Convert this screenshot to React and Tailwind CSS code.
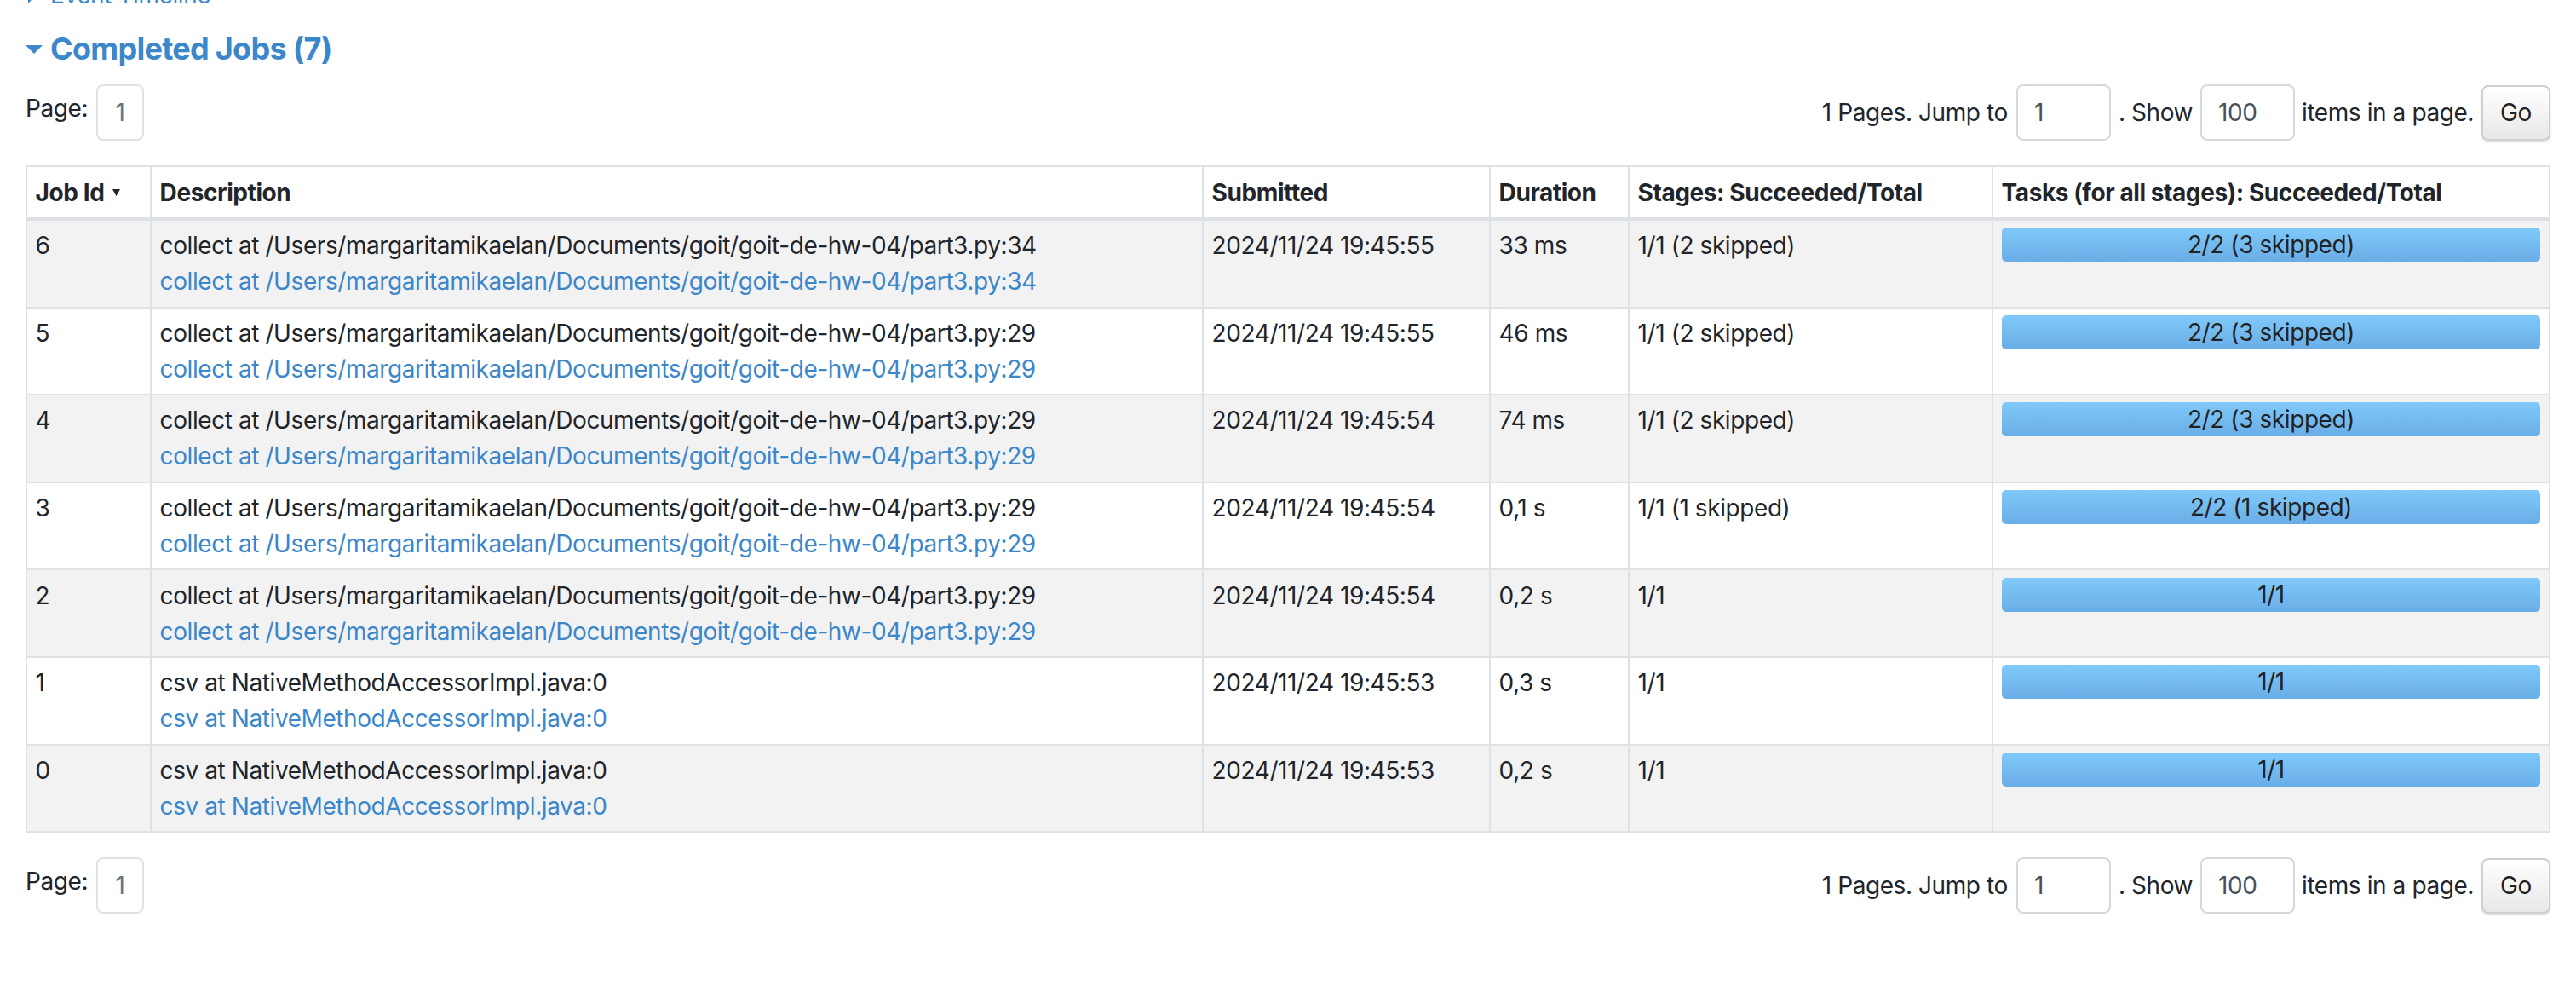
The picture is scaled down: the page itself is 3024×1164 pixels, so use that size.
import React from 'react';

const font = { fontFamily: 'Inter, "Noto Sans", sans-serif' };

const jobs = [
    { id: 6, desc: 'collect at /Users/margaritamikaelan/Documents/goit/goit-de-hw-04/part3.py:34', submitted: '2024/11/24 19:45:55', duration: '33 ms', stages: '1/1 (2 skipped)', tasks: '2/2 (3 skipped)' },
    { id: 5, desc: 'collect at /Users/margaritamikaelan/Documents/goit/goit-de-hw-04/part3.py:29', submitted: '2024/11/24 19:45:55', duration: '46 ms', stages: '1/1 (2 skipped)', tasks: '2/2 (3 skipped)' },
    { id: 4, desc: 'collect at /Users/margaritamikaelan/Documents/goit/goit-de-hw-04/part3.py:29', submitted: '2024/11/24 19:45:54', duration: '74 ms', stages: '1/1 (2 skipped)', tasks: '2/2 (3 skipped)' },
    { id: 3, desc: 'collect at /Users/margaritamikaelan/Documents/goit/goit-de-hw-04/part3.py:29', submitted: '2024/11/24 19:45:54', duration: '0,1 s', stages: '1/1 (1 skipped)', tasks: '2/2 (1 skipped)' },
    { id: 2, desc: 'collect at /Users/margaritamikaelan/Documents/goit/goit-de-hw-04/part3.py:29', submitted: '2024/11/24 19:45:54', duration: '0,2 s', stages: '1/1', tasks: '1/1' },
    { id: 1, desc: 'csv at NativeMethodAccessorImpl.java:0', submitted: '2024/11/24 19:45:53', duration: '0,3 s', stages: '1/1', tasks: '1/1' },
    { id: 0, desc: 'csv at NativeMethodAccessorImpl.java:0', submitted: '2024/11/24 19:45:53', duration: '0,2 s', stages: '1/1', tasks: '1/1' },
];

// pagination bar (top and bottom of the table)
const Pagination = () => (
    <div className="flex items-start justify-between h-[66px]">
        <div className="flex items-start">
            <span className="mt-[7px] leading-[42px]">Page:</span>
            <span className="ml-[10px] w-[56px] h-[66px] border-2 border-[#dee2e6] rounded-[8px] flex items-center justify-center text-[#6c757d]">1</span>
        </div>
        <div className="flex items-center">
            <span>1 Pages. Jump to</span>
            <span className="ml-[10px] w-[111px] h-[66px] border-2 border-[#d5d9de] rounded-[8px] flex items-center pl-[19px] text-[#495057]">1</span>
            <span className="ml-[9px]">. Show</span>
            <span className="ml-[9px] w-[111px] h-[66px] border-2 border-[#d5d9de] rounded-[8px] flex items-center pl-[19px] text-[#495057]">100</span>
            <span className="ml-[8px]">items in a page.</span>
            <span className="ml-[9px] w-[81px] h-[65px] border-2 border-[#cfcfcf] rounded-[8px] bg-gradient-to-b from-white to-[#e8e8e8] shadow-[0_2px_2px_rgba(0,0,0,0.15)] flex items-center justify-center text-[#222]">Go</span>
        </div>
    </div>
);

const Bar = ({ text }) => (
    <div className="h-[40px] rounded-[5px] bg-gradient-to-b from-[#80c9fa] to-[#69ade6] flex items-center justify-center text-[#222]">
        {text}
    </div>
);

export default function App() {
    return (
        <div className="min-h-[1164px] bg-white text-[28px] leading-[42px] tracking-[-0.015em] text-[#212529] px-[30px] overflow-hidden" style={font}>
            {/* EVENT TIMELINE (cut off at top) */}
            <div className="-mt-[27px] flex items-center text-[#3b87c9]">
                <svg width="10" height="20" viewBox="0 0 10 20" className="ml-[3px]"><path d="M0 0 L10 10 L0 20 Z" fill="#3b87c9" /></svg>
                <span className="ml-[16px]">Event Timeline</span>
            </div>

            {/* TITLE */}
            <div className="mt-[21px] flex items-center text-[#3b87c9]">
                <svg width="20" height="10" viewBox="0 0 20 10"><path d="M0 0 L20 0 L10 10 Z" fill="#3b87c9" /></svg>
                <h4 className="ml-[9px] text-[36px] leading-[43px] font-bold tracking-[-0.02em]">Completed Jobs (7)</h4>
            </div>

            <div className="mt-[20px]">
                <Pagination />
            </div>

            {/* TABLE */}
            <table className="mt-[29px] w-full table-fixed border-collapse border-2 border-[#dee2e6]">
                <colgroup>
                    <col className="w-[146px]" />
                    <col className="w-[1235px]" />
                    <col className="w-[337px]" />
                    <col className="w-[163px]" />
                    <col className="w-[427px]" />
                    <col />
                </colgroup>
                <thead>
                    <tr className="text-left">
                        <th className="border-2 border-b-4 border-[#dee2e6] px-[9.6px] py-[8.5px] font-bold">
                            <span className="inline-flex items-center">Job Id<svg width="9" height="8" viewBox="0 0 9 8" className="ml-[10px]"><path d="M0 0 L9 0 L4.5 8 Z" fill="#212529" /></svg></span>
                        </th>
                        <th className="border-2 border-b-4 border-[#dee2e6] px-[9.6px] py-[8.5px] font-bold">Description</th>
                        <th className="border-2 border-b-4 border-[#dee2e6] px-[9.6px] py-[8.5px] font-bold">Submitted</th>
                        <th className="border-2 border-b-4 border-[#dee2e6] px-[9.6px] py-[8.5px] font-bold">Duration</th>
                        <th className="border-2 border-b-4 border-[#dee2e6] px-[9.6px] py-[8.5px] font-bold">Stages: Succeeded/Total</th>
                        <th className="border-2 border-b-4 border-[#dee2e6] px-[9.6px] py-[8.5px] font-bold">Tasks (for all stages): Succeeded/Total</th>
                    </tr>
                </thead>
                <tbody>
                    {jobs.map((job, i) => (
                        <tr key={job.id} className={i % 2 === 0 ? 'bg-[#f2f2f2]' : 'bg-white'}>
                            <td className="border-2 border-[#dee2e6] px-[9.6px] py-[8.3px] align-top">{job.id}</td>
                            <td className="border-2 border-[#dee2e6] px-[9.6px] py-[8.3px] align-top">
                                <div>{job.desc}</div>
                                <div className="text-[#3b87c9]">{job.desc}</div>
                            </td>
                            <td className="border-2 border-[#dee2e6] px-[9.6px] py-[8.3px] align-top">{job.submitted}</td>
                            <td className="border-2 border-[#dee2e6] px-[9.6px] py-[8.3px] align-top">{job.duration}</td>
                            <td className="border-2 border-[#dee2e6] px-[9.6px] py-[8.3px] align-top">{job.stages}</td>
                            <td className="border-2 border-[#dee2e6] px-[9.6px] py-[8.3px] align-top">
                                <Bar text={job.tasks} />
                            </td>
                        </tr>
                    ))}
                </tbody>
            </table>

            <div className="mt-[29px]">
                <Pagination />
            </div>
        </div>
    );
}
